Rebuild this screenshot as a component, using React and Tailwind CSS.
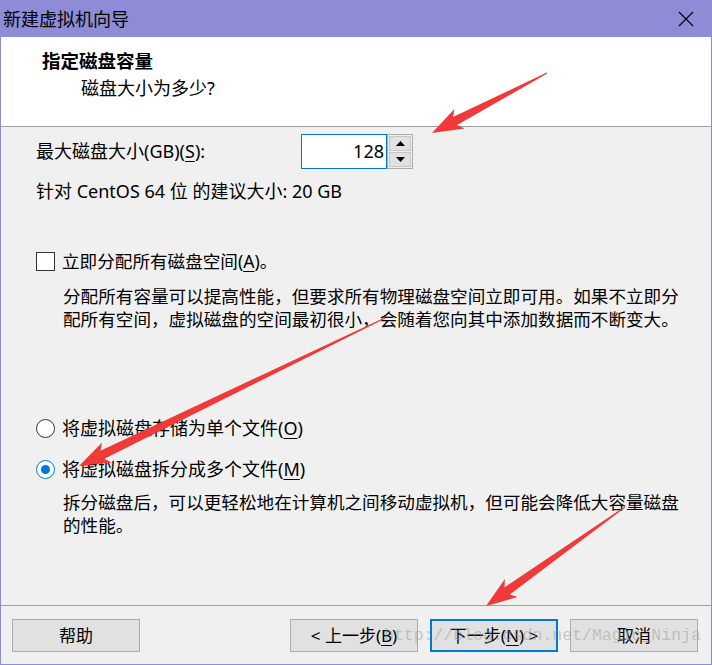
import React from 'react';

// Red annotation arrow: tapering shaft from tail to a barbed head at tip
function arrowPoints(tail, tip, headLen = 26, headHalf = 11, shaftHalf = 4.5) {
    const dx = tip[0] - tail[0];
    const dy = tip[1] - tail[1];
    const len = Math.hypot(dx, dy);
    const ux = dx / len;
    const uy = dy / len;
    const nx = -uy;
    const ny = ux;
    const bx = tip[0] - ux * headLen;
    const by = tip[1] - uy * headLen;
    const pts = [
        [tail[0] + nx * 0.5, tail[1] + ny * 0.5],
        [bx + nx * shaftHalf, by + ny * shaftHalf],
        [bx + nx * headHalf - ux * 5, by + ny * headHalf - uy * 5],
        tip,
        [bx - nx * headHalf - ux * 5, by - ny * headHalf - uy * 5],
        [bx - nx * shaftHalf, by - ny * shaftHalf],
        [tail[0] - nx * 0.5, tail[1] - ny * 0.5],
    ];
    return pts.map((p) => p.join(',')).join(' ');
}

const arrows = [
    { tail: [546, 73], tip: [431, 133] },
    { tail: [384, 318], tip: [78, 466] },
    { tail: [624, 507], tip: [485, 606] },
];

function Mn({ children }) {
    return <span className="underline underline-offset-[3px] decoration-1">{children}</span>;
}

function Btn({ children, primary }) {
    return (
        <button
            className={
                primary
                    ? 'w-[128px] h-[33px] bg-[#e1e1e1] border-2 border-[#0078d7] text-[17px] text-black'
                    : 'w-[128px] h-[33px] bg-[#e1e1e1] border border-[#adadad] text-[17px] text-black'
            }
        >
            {children}
        </button>
    );
}

export default function App() {
    return (
        <div
            className="relative w-[712px] h-[665px] flex flex-col bg-[#f0f0f0] border-x border-b border-[#8f8cd7] text-black overflow-hidden"
            style={{ fontFamily: '"Noto Sans", "Noto Sans CJK SC", sans-serif' }}
        >
            {/* Title bar */}
            <div className="h-[37px] shrink-0 -mx-px bg-[#8f8cd7] flex items-center justify-between pl-[3px] pr-[18px]">
                <span className="text-[18px] leading-none">新建虚拟机向导</span>
                <svg width="16" height="16" viewBox="0 0 16 16">
                    <path d="M1 1 L15 15 M15 1 L1 15" stroke="#000" strokeWidth="1.2" fill="none" />
                </svg>
            </div>

            {/* Header */}
            <div className="h-[90px] shrink-0 bg-white border-b border-[#a0a0a0] pt-[11px]">
                <div className="pl-[41px] text-[18.5px] font-bold leading-[26px]">指定磁盘容量</div>
                <div className="pl-[80px] text-[18px] leading-[26px] mt-px">磁盘大小为多少?</div>
            </div>

            {/* Body */}
            <div className="flex-1 pl-[35px] pr-[16px] pt-[7px]">
                <div className="flex items-center h-[35px]">
                    <span className="w-[265px] text-[18px]">
                        最大磁盘大小(GB)(<Mn>S</Mn>):
                    </span>
                    <div className="w-[86px] h-[35px] bg-white border border-[#0078d7] flex items-center justify-end pr-[2px] text-[18px]">
                        128
                    </div>
                    <div className="w-[26px] h-[35px] border border-[#adadad] bg-[#f0f0f0] flex flex-col gap-px p-px">
                        <div className="flex-1 bg-[#e1e1e1] border border-[#c8c8c8] flex items-center justify-center">
                            <svg width="9" height="5" viewBox="0 0 9 5"><path d="M4.5 0 L9 5 L0 5 Z" fill="#000" /></svg>
                        </div>
                        <div className="flex-1 bg-[#e1e1e1] border border-[#c8c8c8] flex items-center justify-center">
                            <svg width="9" height="5" viewBox="0 0 9 5"><path d="M0 0 L9 0 L4.5 5 Z" fill="#000" /></svg>
                        </div>
                    </div>
                </div>
                <div className="mt-[10px] text-[18px] leading-[24px]">针对 CentOS 64 位 的建议大小: 20 GB</div>

                <div className="mt-[46px] flex items-center gap-[7px] h-[24px]">
                    <div className="w-[19px] h-[19px] bg-white border border-[#333]" />
                    <span className="text-[17.6px]">
                        立即分配所有磁盘空间(<Mn>A</Mn>)。
                    </span>
                </div>
                <p className="mt-[12px] pl-[27px] text-[17.6px] leading-[23px]">
                    分配所有容量可以提高性能，但要求所有物理磁盘空间立即可用。如果不立即分配所有空间，虚拟磁盘的空间最初很小，会随着您向其中添加数据而不断变大。
                </p>

                <div className="mt-[85px] flex items-center gap-[7px] h-[24px]">
                    <div className="w-[19px] h-[19px] rounded-full bg-white border border-[#333]" />
                    <span className="text-[18px]">
                        将虚拟磁盘存储为单个文件(<Mn>O</Mn>)
                    </span>
                </div>
                <div className="mt-[17px] flex items-center gap-[7px] h-[24px]">
                    <div className="w-[19px] h-[19px] rounded-full bg-white border border-[#0078d7] flex items-center justify-center">
                        <div className="w-[9px] h-[9px] rounded-full bg-[#0078d7]" />
                    </div>
                    <span className="text-[18px]">
                        将虚拟磁盘拆分成多个文件(<Mn>M</Mn>)
                    </span>
                </div>
                <p className="mt-[10px] pl-[27px] text-[17.6px] leading-[23px]">
                    拆分磁盘后，可以更轻松地在计算机之间移动虚拟机，但可能会降低大容量磁盘的性能。
                </p>
            </div>

            {/* Footer */}
            <div className="h-[59px] shrink-0 border-t border-[#a0a0a0] pt-[13px] pl-[11px] pr-[13px] flex items-start">
                <Btn>帮助</Btn>
                <div className="flex-1" />
                <div className="flex gap-[12px]">
                    <Btn>&lt; 上一步(<Mn>B</Mn>)</Btn>
                    <Btn primary>下一步(<Mn>N</Mn>) &gt;</Btn>
                    <Btn>取消</Btn>
                </div>
            </div>

            {/* Watermark */}
            <div
                className="absolute left-[383px] top-[622px] text-[16.5px] leading-[28px] text-[#9a9a9a]/50 pointer-events-none"
                style={{ fontFamily: '"Liberation Mono", monospace' }}
            >
                http://blog.csdn.net/Magic_Ninja
            </div>

            {/* Annotation arrows */}
            <svg className="absolute inset-0 pointer-events-none" width="712" height="665">
                {arrows.map((a, i) => (
                    <polygon key={i} points={arrowPoints(a.tail, a.tip)} fill="#f03a3a" />
                ))}
            </svg>
        </div>
    );
}
